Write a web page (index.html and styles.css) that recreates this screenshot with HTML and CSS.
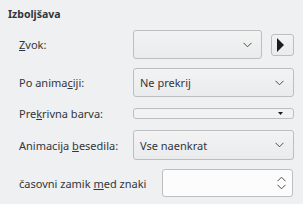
FILE: index.html
```html
<!DOCTYPE html>
<html lang="sl">
<head>
  <meta charset="UTF-8" />
  <title>Izboljšava</title>
  <link rel="stylesheet" href="styles.css">
</head>
<body>
  <div class="panel">
    <h3>Izboljšava</h3>

    <div class="form">
      <label><u>Z</u>vok:</label>
      <div class="field-row">
        <div class="combo sound">
          <span></span>
          <svg class="chevron" width="9" height="6" viewBox="0 0 9 6"><path d="M0.5 0.8 L4.5 4.8 L8.5 0.8" fill="none" stroke="#4d4d4d" stroke-width="1"/></svg>
        </div>
        <button class="play">
          <svg width="8" height="14" viewBox="0 0 8 14"><path d="M0 0 L7 7 L0 14 Z" fill="#1d1d1d"/></svg>
        </button>
      </div>

      <label>Po anima<u>c</u>iji:</label>
      <div class="combo">
        <span>Ne prekrij</span>
        <svg class="chevron" width="9" height="6" viewBox="0 0 9 6"><path d="M0.5 0.8 L4.5 4.8 L8.5 0.8" fill="none" stroke="#4d4d4d" stroke-width="1"/></svg>
      </div>

      <label>Pre<u>k</u>rivna barva:</label>
      <div class="color-btn">
        <svg width="5" height="3" viewBox="0 0 5 3"><path d="M0 0 L5 0 L2.5 3 Z" fill="#1d1d1d"/></svg>
      </div>

      <label>Animacija <u>b</u>esedila:</label>
      <div class="combo tall">
        <span>Vse naenkrat</span>
        <svg class="chevron" width="9" height="6" viewBox="0 0 9 6"><path d="M0.5 0.8 L4.5 4.8 L8.5 0.8" fill="none" stroke="#4d4d4d" stroke-width="1"/></svg>
      </div>
    </div>

    <div class="delay-row">
      <label>časovni zamik <u>m</u>ed znaki</label>
      <div class="spin">
        <span class="spin-arrows">
          <svg width="9" height="6" viewBox="0 0 9 6"><path d="M0.5 5.2 L4.5 1.2 L8.5 5.2" fill="none" stroke="#4d4d4d" stroke-width="1"/></svg>
          <svg width="9" height="6" viewBox="0 0 9 6"><path d="M0.5 0.8 L4.5 4.8 L8.5 0.8" fill="none" stroke="#4d4d4d" stroke-width="1"/></svg>
        </span>
      </div>
    </div>
  </div>
</body>
</html>
```

FILE: styles.css
```css
body {
  margin: 0;
  font-family: 'Noto Sans', sans-serif;
  font-size: 11px;
  background-color: #eff0f1;
  color: #31363b;
}

.panel {
  width: 303px;
  height: 204px;
  padding: 7px 9px 0 8px;
  box-sizing: border-box;
}

h3 {
  margin: 0;
  font-size: 10.5px;
  font-weight: bold;
  line-height: 14px;
}

u {
  text-decoration-thickness: 1px;
  text-underline-offset: 1px;
}

.form {
  display: grid;
  grid-template-columns: 114px 161px;
  row-gap: 9px;
  align-items: center;
  margin-top: 9px;
  margin-left: 11px;
}

.field-row {
  display: flex;
  align-items: center;
  gap: 9px;
}

.combo {
  display: flex;
  align-items: center;
  justify-content: space-between;
  height: 29px;
  box-sizing: border-box;
  padding: 0 9px 0 6px;
  border: 1px solid #bdbebf;
  border-radius: 3px;
  background: linear-gradient(#f3f3f4, #eaebec);
}

.combo.sound {
  width: 129px;
}

.combo.tall {
  height: 30px;
}

.play {
  width: 23px;
  height: 22px;
  padding: 0 0 0 5px;
  border: 1px solid #bdbebf;
  border-radius: 3px;
  background: linear-gradient(#f3f3f4, #eaebec);
  display: flex;
  align-items: center;
}

.color-btn {
  height: 11px;
  box-sizing: border-box;
  border: 1px solid #bdbebf;
  border-radius: 3px;
  background: #f2f2f3;
  display: flex;
  align-items: center;
  justify-content: flex-end;
  padding-right: 10px;
  margin: 1px 0;
}

.delay-row {
  display: flex;
  align-items: center;
  margin: 9px 0 0 11px;
}

.delay-row label {
  width: 143px;
  flex-shrink: 0;
}

.spin {
  width: 131px;
  height: 28px;
  box-sizing: border-box;
  border: 1px solid #bdbebf;
  border-radius: 3px;
  background: #fcfcfc;
  display: flex;
  justify-content: flex-end;
  align-items: center;
  padding-right: 6px;
}

.spin-arrows {
  display: flex;
  flex-direction: column;
  gap: 2px;
}

.spin-arrows svg {
  display: block;
}
```
